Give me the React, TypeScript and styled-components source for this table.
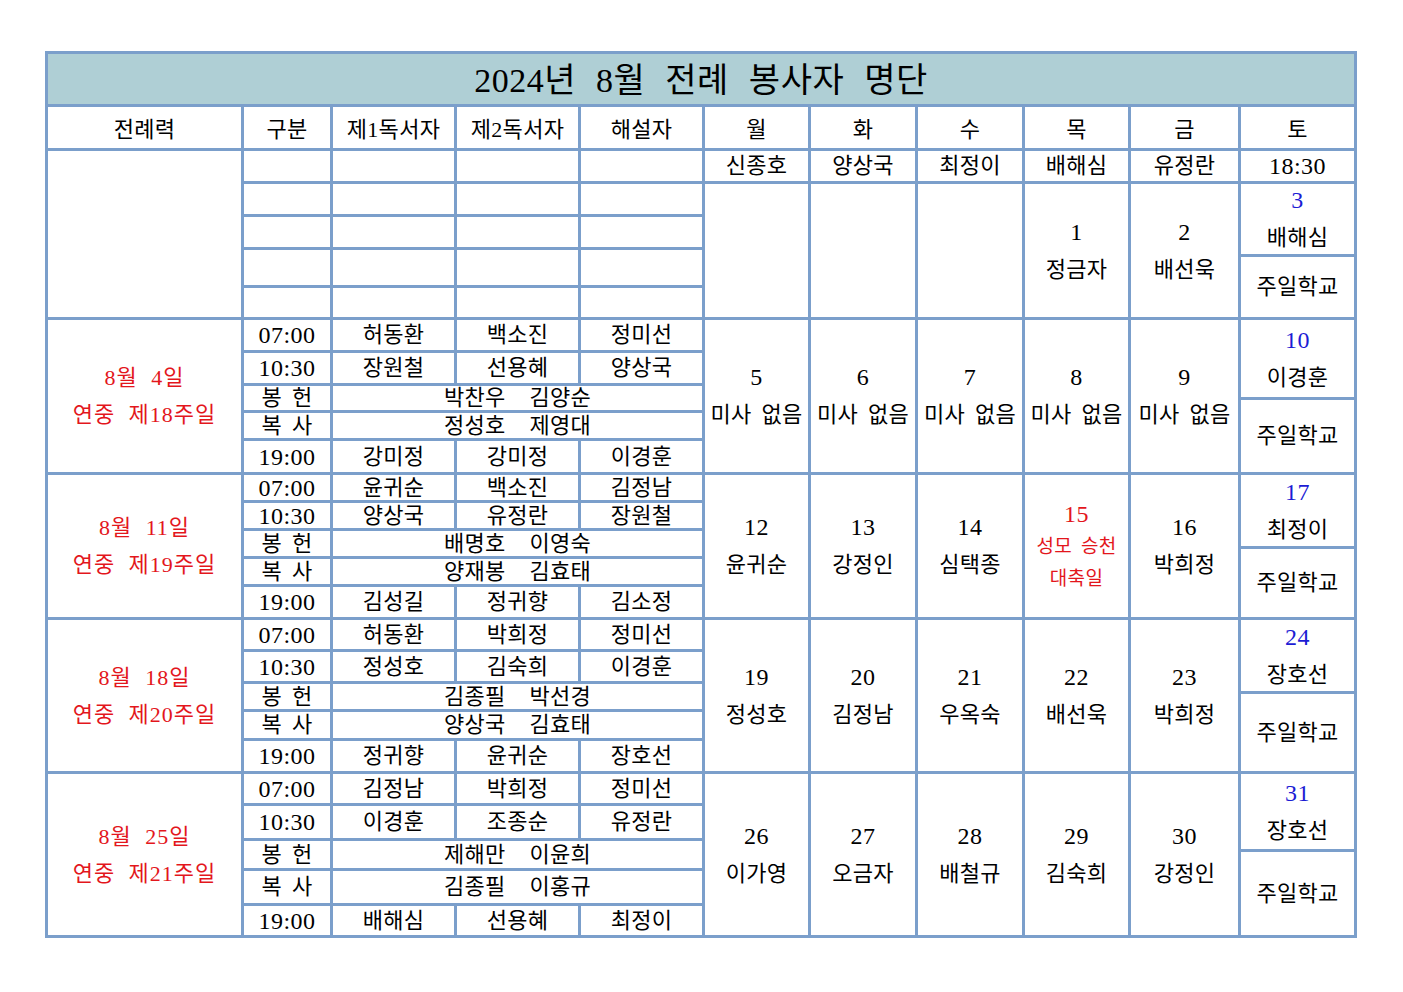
import React from "react";
import styled, { createGlobalStyle } from "styled-components";

const LINE = "#7b9fcb";
const RED = "#e3161c";
const BLUE = "#1c1cd4";

const GlobalStyle = createGlobalStyle`
  body {
    margin: 0;
    background: #ffffff;
  }
`;

const Page = styled.div`
  padding: 51px 0 40px 45px;
  font-family: "Liberation Serif", "Noto Sans CJK KR", serif;
  color: #000;
`;

// every row of the sheet, top to bottom (title, header, then 5 blocks of 5 rows)
const ROWS = [
  50, 41,
  30, 30, 30, 35, 29,
  30, 30, 24, 25, 31,
  25, 25, 25, 25, 30,
  29, 29, 25, 26, 30,
  29, 32, 27, 32, 29,
];

const Sheet = styled.div`
  display: inline-grid;
  grid-template-columns: 193px 86px 121px 121px 121px 103px 104px 104px 103px 107px 113px;
  grid-template-rows: ${ROWS.map((r) => `${r}px`).join(" ")};
  gap: 3px;
  padding: 3px;
  background: ${LINE};
`;

const Cell = styled.div<{ $col: string; $row: string; $color?: string }>`
  grid-column: ${(p) => p.$col};
  grid-row: ${(p) => p.$row};
  background: #fff;
  display: flex;
  flex-direction: column;
  align-items: center;
  justify-content: center;
  font-size: 22px;
  letter-spacing: 0.3px;
  word-spacing: 4px;
  line-height: 1;
  white-space: nowrap;
  color: ${(p) => p.$color ?? "#000"};
`;

const Title = styled(Cell)`
  background: #afcfd5;
  padding-top: 3px;
  font-size: 34px;
  letter-spacing: 0.5px;
  word-spacing: 11px;
`;

const HeadCell = styled(Cell)`
  padding-top: 4px;
`;

const Num = styled.span`
  font-size: 24px;
  letter-spacing: 0.5px;
`;

const Line = styled.div<{ $h?: number; $size?: number; $color?: string }>`
  line-height: ${(p) => p.$h ?? 37}px;
  font-size: ${(p) => (p.$size ? `${p.$size}px` : "inherit")};
  color: ${(p) => p.$color ?? "inherit"};
`;

const Pair = styled.div`
  display: flex;
  gap: 24px;
`;

const SatBox = styled.div<{ $row: string; $top: number }>`
  grid-column: 11;
  grid-row: ${(p) => p.$row};
  display: grid;
  grid-template-rows: ${(p) => p.$top}px 1fr;
  gap: 3px;
  background: ${LINE};
`;

const SatPart = styled.div`
  background: #fff;
  display: flex;
  flex-direction: column;
  align-items: center;
  justify-content: center;
  font-size: 22px;
  letter-spacing: 0.3px;
  line-height: 1;
  white-space: nowrap;
`;

const Label = styled(Cell)`
  font-size: 22px;
  letter-spacing: 1px;
  word-spacing: 7px;
`;

type Day = { n: string; who?: string; feast?: [string, string] };

type Week = {
  date: string;
  title: string;
  am7: string[];
  am10: string[];
  offer: [string, string];
  serve: [string, string];
  pm7: string[];
  days: Day[];
  sat: [string, string];
  satTop: number;
};

const weeks: Week[] = [
  {
    date: "8월 4일",
    title: "연중 제18주일",
    am7: ["허동환", "백소진", "정미선"],
    am10: ["장원철", "선용혜", "양상국"],
    offer: ["박찬우", "김양순"],
    serve: ["정성호", "제영대"],
    pm7: ["강미정", "강미정", "이경훈"],
    days: [
      { n: "5", who: "미사 없음" },
      { n: "6", who: "미사 없음" },
      { n: "7", who: "미사 없음" },
      { n: "8", who: "미사 없음" },
      { n: "9", who: "미사 없음" },
    ],
    sat: ["10", "이경훈"],
    satTop: 77,
  },
  {
    date: "8월 11일",
    title: "연중 제19주일",
    am7: ["윤귀순", "백소진", "김정남"],
    am10: ["양상국", "유정란", "장원철"],
    offer: ["배명호", "이영숙"],
    serve: ["양재봉", "김효태"],
    pm7: ["김성길", "정귀향", "김소정"],
    days: [
      { n: "12", who: "윤귀순" },
      { n: "13", who: "강정인" },
      { n: "14", who: "심택종" },
      { n: "15", feast: ["성모 승천", "대축일"] },
      { n: "16", who: "박희정" },
    ],
    sat: ["17", "최정이"],
    satTop: 71,
  },
  {
    date: "8월 18일",
    title: "연중 제20주일",
    am7: ["허동환", "박희정", "정미선"],
    am10: ["정성호", "김숙희", "이경훈"],
    offer: ["김종필", "박선경"],
    serve: ["양상국", "김효태"],
    pm7: ["정귀향", "윤귀순", "장호선"],
    days: [
      { n: "19", who: "정성호" },
      { n: "20", who: "김정남" },
      { n: "21", who: "우옥숙" },
      { n: "22", who: "배선욱" },
      { n: "23", who: "박희정" },
    ],
    sat: ["24", "장호선"],
    satTop: 71,
  },
  {
    date: "8월 25일",
    title: "연중 제21주일",
    am7: ["김정남", "박희정", "정미선"],
    am10: ["이경훈", "조종순", "유정란"],
    offer: ["제해만", "이윤희"],
    serve: ["김종필", "이홍규"],
    pm7: ["배해심", "선용혜", "최정이"],
    days: [
      { n: "26", who: "이가영" },
      { n: "27", who: "오금자" },
      { n: "28", who: "배철규" },
      { n: "29", who: "김숙희" },
      { n: "30", who: "강정인" },
    ],
    sat: ["31", "장호선"],
    satTop: 75,
  },
];

const headers = ["전례력", "구분", "제1독서자", "제2독서자", "해설자", "월", "화", "수", "목", "금", "토"];
const firstRow = ["신종호", "양상국", "최정이", "배해심", "유정란"];

function DayCell({ col, row, day }: { col: number; row: string; day?: Day }) {
  return (
    <Cell $col={`${col}`} $row={row}>
      {day && (
        <>
          <Line $h={day.feast ? 33 : 37} $color={day.feast ? RED : undefined}>
            <Num>{day.n}</Num>
          </Line>
          {day.who && <Line>{day.who}</Line>}
          {day.feast &&
            day.feast.map((t) => (
              <Line key={t} $h={32} $size={19} $color={RED}>
                {t}
              </Line>
            ))}
        </>
      )}
    </Cell>
  );
}

function Saturday({ row, top, n, who }: { row: string; top: number; n: string; who: string }) {
  return (
    <SatBox $row={row} $top={top}>
      <SatPart>
        <Line $color={BLUE}>
          <Num>{n}</Num>
        </Line>
        <Line>{who}</Line>
      </SatPart>
      <SatPart>주일학교</SatPart>
    </SatBox>
  );
}

function FirstBlock() {
  return (
    <>
      <Cell $col="1" $row="3 / span 5" />
      {[3, 4, 5, 6, 7].map((r) =>
        [2, 3, 4, 5].map((c) => <Cell key={`${r}-${c}`} $col={`${c}`} $row={`${r}`} />)
      )}
      {firstRow.map((name, i) => (
        <Cell key={name + i} $col={`${6 + i}`} $row="3">
          {name}
        </Cell>
      ))}
      <Cell $col="11" $row="3">
        <Num>18:30</Num>
      </Cell>
      <DayCell col={6} row="4 / span 4" />
      <DayCell col={7} row="4 / span 4" />
      <DayCell col={8} row="4 / span 4" />
      <DayCell col={9} row="4 / span 4" day={{ n: "1", who: "정금자" }} />
      <DayCell col={10} row="4 / span 4" day={{ n: "2", who: "배선욱" }} />
      <Saturday row="4 / span 4" top={70} n="3" who="배해심" />
    </>
  );
}

function WeekBlock({ week, start }: { week: Week; start: number }) {
  const names = (r: number, list: string[]) =>
    list.map((name, i) => (
      <Cell key={`${r}-${i}`} $col={`${3 + i}`} $row={`${r}`}>
        {name}
      </Cell>
    ));
  return (
    <>
      <Label $col="1" $row={`${start} / span 5`} $color={RED}>
        <Line>{week.date}</Line>
        <Line>{week.title}</Line>
      </Label>

      <Cell $col="2" $row={`${start}`}>
        <Num>07:00</Num>
      </Cell>
      {names(start, week.am7)}

      <Cell $col="2" $row={`${start + 1}`}>
        <Num>10:30</Num>
      </Cell>
      {names(start + 1, week.am10)}

      <Cell $col="2" $row={`${start + 2}`}>봉 헌</Cell>
      <Cell $col="3 / span 3" $row={`${start + 2}`}>
        <Pair>
          <span>{week.offer[0]}</span>
          <span>{week.offer[1]}</span>
        </Pair>
      </Cell>

      <Cell $col="2" $row={`${start + 3}`}>복 사</Cell>
      <Cell $col="3 / span 3" $row={`${start + 3}`}>
        <Pair>
          <span>{week.serve[0]}</span>
          <span>{week.serve[1]}</span>
        </Pair>
      </Cell>

      <Cell $col="2" $row={`${start + 4}`}>
        <Num>19:00</Num>
      </Cell>
      {names(start + 4, week.pm7)}

      {week.days.map((d, i) => (
        <DayCell key={d.n} col={6 + i} row={`${start} / span 5`} day={d} />
      ))}
      <Saturday row={`${start} / span 5`} top={week.satTop} n={week.sat[0]} who={week.sat[1]} />
    </>
  );
}

export default function App() {
  return (
    <Page>
      <GlobalStyle />
      <Sheet>
        <Title $col="1 / -1" $row="1">
          2024년 8월 전례 봉사자 명단
        </Title>
        {headers.map((h, i) => (
          <HeadCell key={h} $col={`${i + 1}`} $row="2">
            {h}
          </HeadCell>
        ))}
        <FirstBlock />
        {weeks.map((w, i) => (
          <WeekBlock key={w.date} week={w} start={8 + i * 5} />
        ))}
      </Sheet>
    </Page>
  );
}
